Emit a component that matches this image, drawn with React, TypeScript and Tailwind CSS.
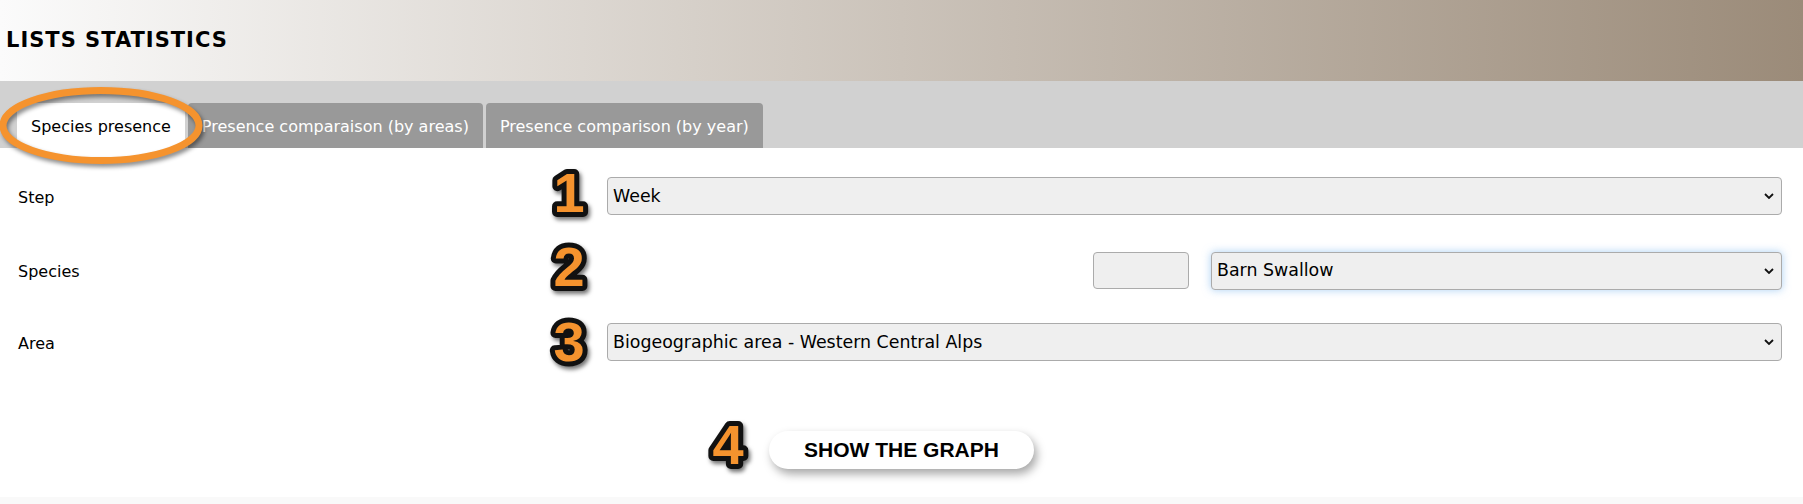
import { useState } from "react";

const ORANGE = "#f5932e";

function Num({ n }: { n: string }) {
  return (
    <svg
      width="56"
      height="64"
      viewBox="0 0 56 64"
      className="overflow-visible [filter:drop-shadow(2px_3px_2px_rgba(0,0,0,0.55))]"
    >
      <text
        x="28"
        y="52"
        textAnchor="middle"
        fontFamily="'Liberation Sans', Arial, sans-serif"
        fontWeight="700"
        fontSize="56"
        fill={ORANGE}
        stroke="#111"
        strokeWidth="10"
        strokeLinejoin="round"
        paintOrder="stroke"
      >
        {n}
      </text>
    </svg>
  );
}

function Chevron() {
  return (
    <svg
      width="10"
      height="7"
      viewBox="0 0 10 7"
      className="pointer-events-none absolute right-[8px] top-1/2 -translate-y-1/2"
    >
      <path d="M1 1.5l4 4 4-4" fill="none" stroke="#111" strokeWidth="1.8" />
    </svg>
  );
}

function Select({ value, options, glow }: { value: string; options: string[]; glow?: boolean }) {
  const [v, setV] = useState(value);
  return (
    <div className="relative w-full">
      <select
        value={v}
        onChange={(e) => setV(e.target.value)}
        className={
          "h-[38px] w-full appearance-none rounded-[4px] border border-[#ababab] bg-[#efefef] pl-[5px] pr-6 text-[17.4px] text-black outline-none " +
          (glow ? "shadow-[0_0_9px_rgba(102,170,235,0.55)]" : "")
        }
      >
        {options.map((o) => (
          <option key={o}>{o}</option>
        ))}
      </select>
      <Chevron />
    </div>
  );
}

export default function App() {
  const [tab, setTab] = useState(0);
  const tabs = ["Species presence", "Presence comparaison (by areas)", "Presence comparison (by year)"];

  return (
    <div className="relative min-h-[504px] w-full bg-white font-['DejaVu_Sans',Verdana,sans-serif] text-black">
      {/* header */}
      <div className="flex h-[81px] items-center bg-[linear-gradient(to_right,#fbfbfb,#9b8b79)] pl-[6px]">
        <h1 className="text-[21px] font-bold tracking-[1px] text-black">LISTS STATISTICS</h1>
      </div>

      {/* tab bar */}
      <div className="flex h-[67px] items-end gap-[3px] bg-[#d1d1d1] pl-[17px]">
        {tabs.map((t, i) => (
          <button
            key={t}
            onClick={() => setTab(i)}
            className={
              "flex h-[45px] items-center rounded-t-[4px] px-[14px] pt-[2px] text-[16px] " +
              (tab === i ? "bg-white text-black" : "bg-[#999999] text-white")
            }
          >
            {t}
          </button>
        ))}
      </div>

      {/* highlight ring round the first tab */}
      <svg
        width="210"
        height="86"
        viewBox="0 0 210 86"
        className="pointer-events-none absolute left-0 top-[85px] [filter:drop-shadow(2px_3px_2px_rgba(0,0,0,0.45))]"
      >
        <ellipse cx="101" cy="40.5" rx="98" ry="35" fill="none" stroke={ORANGE} strokeWidth="7" />
      </svg>

      {/* form */}
      <div className="pl-[18px] pr-[21px] pt-[29px]">
        <div className="grid h-[38px] grid-cols-[589px_1fr] items-center">
          <label className="pt-[3px] text-[16px]">Step</label>
          <div className="relative">
            <div className="absolute left-[-66px] top-[-17px]">
              <Num n="1" />
            </div>
            <Select value="Week" options={["Day", "Week", "Month"]} />
          </div>
        </div>

        <div className="mt-[37px] grid h-[37px] grid-cols-[589px_1fr] items-center">
          <label className="pt-[3px] text-[16px]">Species</label>
          <div className="relative flex h-[37px] items-center justify-end gap-[22px]">
            <div className="absolute left-[-66px] top-[-18px]">
              <Num n="2" />
            </div>
            <input className="h-[37px] w-[96px] rounded-[4px] border border-[#ababab] bg-[#efefef] outline-none" />
            <div className="w-[571px]">
              <Select value="Barn Swallow" options={["Barn Swallow", "Common Swift"]} glow />
            </div>
          </div>
        </div>

        <div className="mt-[34px] grid h-[38px] grid-cols-[589px_1fr] items-center">
          <label className="pt-[3px] text-[16px]">Area</label>
          <div className="relative">
            <div className="absolute left-[-66px] top-[-14px]">
              <Num n="3" />
            </div>
            <Select
              value="Biogeographic area - Western Central Alps"
              options={["Biogeographic area - Western Central Alps", "Biogeographic area - Jura"]}
            />
          </div>
        </div>
      </div>

      {/* action */}
      <div className="mt-[70px] flex justify-center">
        <div className="relative">
          <div className="absolute left-[-69px] top-[-19px]">
            <Num n="4" />
          </div>
          <button className="h-[38px] w-[265px] rounded-full bg-white font-['Liberation_Sans',Arial,sans-serif] text-[21px] font-bold text-black shadow-[3px_5px_10px_rgba(0,0,0,0.35)]">
            SHOW THE GRAPH
          </button>
        </div>
      </div>

      <div className="mt-[28px] h-[7px] bg-[#f9f9f9]" />
    </div>
  );
}
